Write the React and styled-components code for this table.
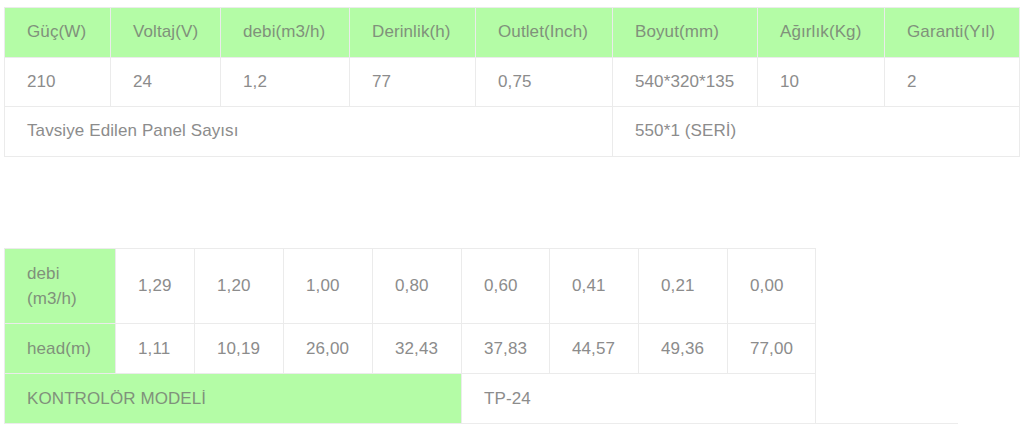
import React from "react";
import styled, { createGlobalStyle } from "styled-components";

const GlobalStyle = createGlobalStyle`
  body {
    margin: 0;
    background: #ffffff;
    font-family: "Liberation Sans", Arial, sans-serif;
  }
`;

const Page = styled.div`
  padding: 7px 5px 0 4px;
  width: 1024px;
  box-sizing: border-box;
`;

const Table = styled.table`
  border-collapse: collapse;
  table-layout: fixed;
  width: ${(p) => p.width}px;
  margin-top: ${(p) => p.top || 0}px;
  font-size: 17px;
  letter-spacing: 0.1px;
  line-height: ${(p) => p.lh || 24.5}px;
`;

const Cell = styled.td`
  border: 1px solid #ebebeb;
  padding: 12px 6px 12px 22px;
  vertical-align: middle;
  text-align: left;
  color: ${(p) => (p.green ? "#80917b" : "#8c8c8c")};
  background: ${(p) => (p.green ? "#b4fca6" : "#ffffff")};
  font-weight: normal;
  white-space: ${(p) => (p.nowrap ? "nowrap" : "normal")};
`;

const HeadCell = styled(Cell).attrs({ as: "th", green: true })``;

const Rule = styled.div`
  width: 954px;
  margin-top: -1px;
  border-top: 1px solid #ececec;
`;

const specCols = [106, 110, 129, 126, 137, 145, 127, 135];
const specHead = [
  "Güç(W)",
  "Voltaj(V)",
  "debi(m3/h)",
  "Derinlik(h)",
  "Outlet(Inch)",
  "Boyut(mm)",
  "Ağırlık(Kg)",
  "Garanti(Yıl)",
];
const specRow = ["210", "24", "1,2", "77", "0,75", "540*320*135", "10", "2"];

const curveCols = [111, 79, 89, 89, 89, 88, 89, 89, 88];
const flow = ["1,29", "1,20", "1,00", "0,80", "0,60", "0,41", "0,21", "0,00"];
const head = ["1,11", "10,19", "26,00", "32,43", "37,83", "44,57", "49,36", "77,00"];

export default function App() {
  return (
    <Page>
      <GlobalStyle />
      <Table width={1015}>
        <colgroup>
          {specCols.map((w, i) => (
            <col key={i} style={{ width: w }} />
          ))}
        </colgroup>
        <thead>
          <tr>
            {specHead.map((h) => (
              <HeadCell key={h} nowrap>
                {h}
              </HeadCell>
            ))}
          </tr>
        </thead>
        <tbody>
          <tr>
            {specRow.map((v, i) => (
              <Cell key={i} nowrap>
                {v}
              </Cell>
            ))}
          </tr>
          <tr>
            <Cell colSpan={5}>Tavsiye Edilen Panel Sayısı</Cell>
            <Cell colSpan={3}>550*1 (SERİ)</Cell>
          </tr>
        </tbody>
      </Table>

      <Table width={811} top={91} lh={25}>
        <colgroup>
          {curveCols.map((w, i) => (
            <col key={i} style={{ width: w }} />
          ))}
        </colgroup>
        <tbody>
          <tr>
            <Cell green>
              debi
              <br />
              (m3/h)
            </Cell>
            {flow.map((v, i) => (
              <Cell key={i} nowrap>
                {v}
              </Cell>
            ))}
          </tr>
          <tr>
            <Cell green nowrap>
              head(m)
            </Cell>
            {head.map((v, i) => (
              <Cell key={i} nowrap>
                {v}
              </Cell>
            ))}
          </tr>
          <tr>
            <Cell green colSpan={5}>
              KONTROLÖR MODELİ
            </Cell>
            <Cell colSpan={4}>TP-24</Cell>
          </tr>
        </tbody>
      </Table>
      <Rule />
    </Page>
  );
}
